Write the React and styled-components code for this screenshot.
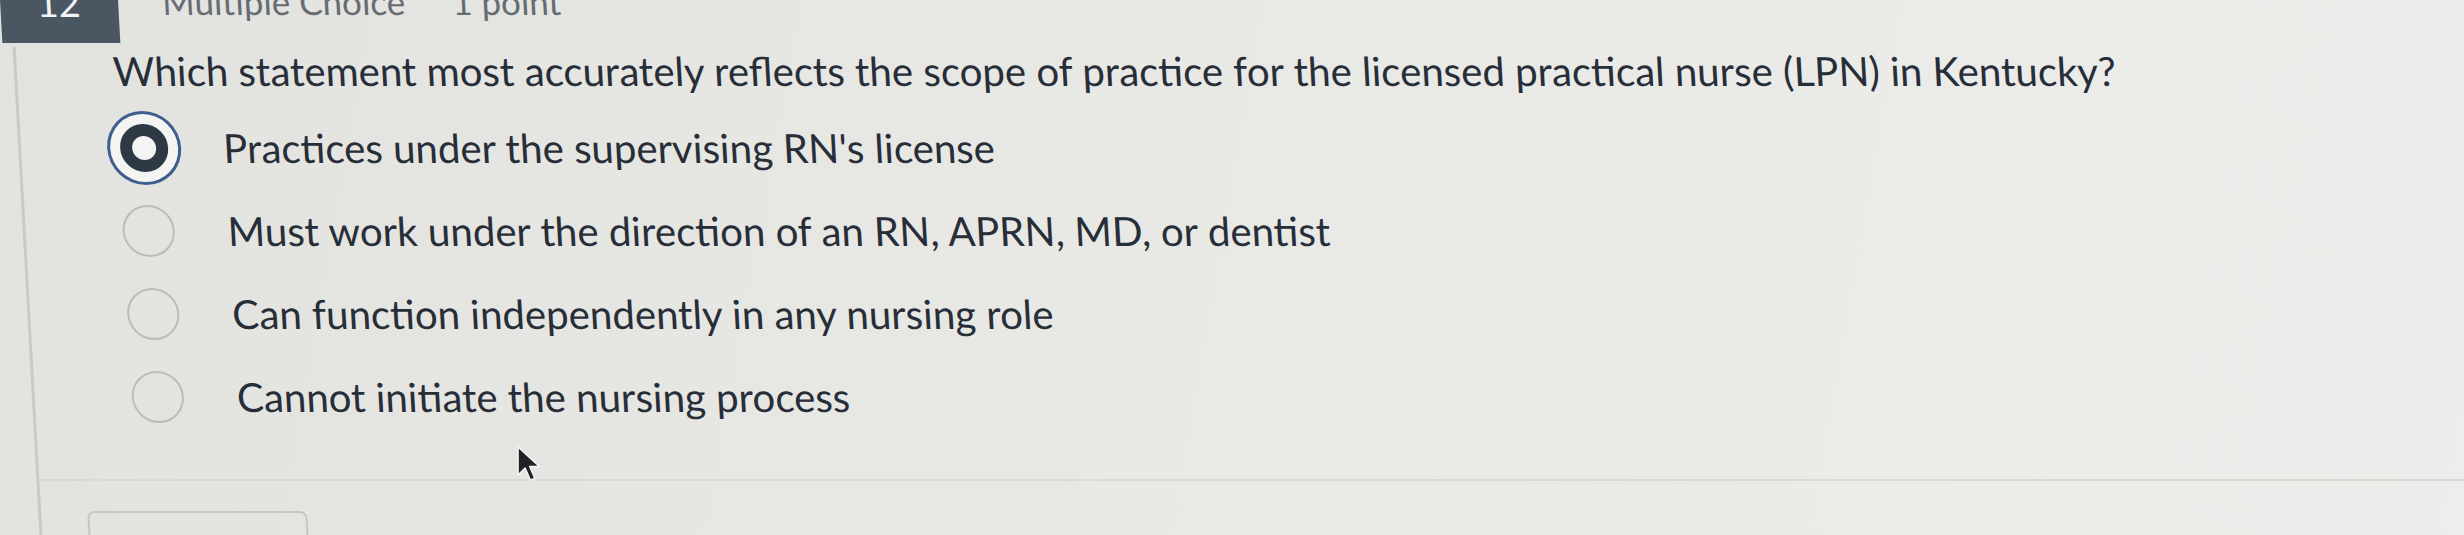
import React from "react";
import styled, { createGlobalStyle } from "styled-components";

const GlobalStyle = createGlobalStyle`
  html, body {
    margin: 0;
    padding: 0;
    height: 100%;
  }
  body {
    overflow: hidden;
    background: linear-gradient(100deg, #e2e2df 0%, #e8e8e5 45%, #ededeb 100%);
    font-family: Lato, "Open Sans", "Liberation Sans", sans-serif;
  }
`;

const Page = styled.div`
  position: relative;
  width: 2464px;
  height: 535px;
  overflow: hidden;
`;

// the photo was taken at a slight angle, so the sheet leans to the right
const Sheet = styled.div`
  transform: skewX(3.15deg);
  transform-origin: 0 0;
`;

const Header = styled.header`
  display: flex;
  align-items: flex-start;
  height: 43px;
`;

const Badge = styled.div`
  width: 118px;
  height: 43px;
  background: #4b5663;
  color: #f2f3f4;
  font-size: 38px;
  line-height: 1;
  display: flex;
  justify-content: center;
  padding-right: 2px;
  box-sizing: border-box;

  span {
    margin-top: -17px;
  }
`;

const Meta = styled.span`
  color: #676c73;
  font-size: 35px;
  line-height: 1;
  margin-top: -16px;
  margin-left: ${(p) => p.gap}px;
`;

const Body = styled.section`
  margin-left: 10px;
  border-left: 3px solid #c9c9c6;
  padding-left: 96px;
  height: 492px;
`;

const Question = styled.p`
  margin: 4px 0 0;
  color: #272e38;
  font-size: 40.2px;
  line-height: 48px;
`;

const Options = styled.ul`
  list-style: none;
  margin: 11px 0 0;
  padding: 0;
`;

const Option = styled.li`
  display: flex;
  align-items: center;
  height: 83px;
`;

const RadioSlot = styled.span`
  width: 76px;
  display: flex;
  justify-content: center;
  align-items: center;
  margin-left: -11px;
  margin-right: 41px;
`;

const Radio = styled.span`
  box-sizing: border-box;
  border-radius: 50%;
  width: ${(p) => (p.checked ? 48 : 52)}px;
  height: ${(p) => (p.checked ? 48 : 52)}px;
  border: ${(p) => (p.checked ? "12px solid #2d3944" : "2px solid #bcbcba")};
  background: ${(p) => (p.checked ? "#f4f4f3" : "transparent")};
  box-shadow: ${(p) =>
    p.checked ? "0 0 0 10px #f4f4f3, 0 0 0 13px #3e5f8e" : "none"};
`;

const Label = styled.span`
  color: #272e38;
  font-size: 40.2px;
  line-height: 48px;
`;

const Divider = styled.hr`
  margin: 41px 0 0 -96px;
  border: 0;
  height: 2px;
  background: #d9d9d6;
`;

const AnswerBox = styled.div`
  margin: 30px 0 0 -50px;
  width: 216px;
  height: 40px;
  border: 2px solid #c6c6c3;
  border-radius: 7px;
`;

const Cursor = styled.svg`
  position: absolute;
  left: 516px;
  top: 445px;
  width: 28px;
  height: 40px;
`;

const options = [
  { text: "Practices under the supervising RN's license", checked: true },
  { text: "Must work under the direction of an RN, APRN, MD, or dentist" },
  { text: "Can function independently in any nursing role" },
  { text: "Cannot initiate the nursing process" },
];

const App = () => (
  <Page>
    <GlobalStyle />
    <Sheet>
      <Header>
        <Badge>
          <span>12</span>
        </Badge>
        <Meta gap={44}>Multiple Choice</Meta>
        <Meta gap={47}>1 point</Meta>
      </Header>
      <Body>
        <Question>
          Which statement most accurately reflects the scope of practice for the
          licensed practical nurse (LPN) in Kentucky?
        </Question>
        <Options>
          {options.map((o) => (
            <Option key={o.text}>
              <RadioSlot>
                <Radio checked={o.checked} />
              </RadioSlot>
              <Label>{o.text}</Label>
            </Option>
          ))}
        </Options>
        <Divider />
        <AnswerBox />
      </Body>
    </Sheet>
    <Cursor viewBox="0 0 14 20">
      <path
        d="M1 1 L1 15 L4.6 11.6 L7.2 17.6 L9.4 16.6 L6.9 10.8 L11.8 10.8 Z"
        fill="#1f2326"
        stroke="#f4f4f4"
        strokeWidth="0.8"
        strokeLinejoin="round"
      />
    </Cursor>
  </Page>
);

export default App;
